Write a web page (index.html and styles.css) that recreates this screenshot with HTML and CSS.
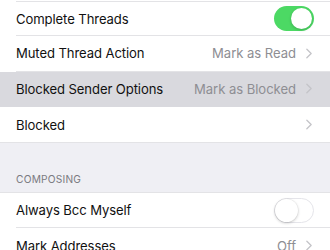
FILE: index.html
```html
<!DOCTYPE html>
<html>
<head>
<meta charset="utf-8">
<link rel="stylesheet" href="styles.css">
</head>
<body>
<div class="top-gap"></div>
<div class="group first">
  <div class="row">
    <div class="inner">
      <span class="label">Complete Threads</span>
      <span class="switch on"><span class="knob"></span></span>
    </div>
  </div>
  <div class="row">
    <div class="inner">
      <span class="label">Muted Thread Action</span>
      <span class="value">Mark as Read</span>
      <svg class="chev" viewBox="0 0 7 12" width="7" height="12"><path d="M1 1 L6 6 L1 11" fill="none" stroke="#c4c4c8" stroke-width="1.5" stroke-linecap="round" stroke-linejoin="round"/></svg>
    </div>
  </div>
  <div class="row selected">
    <div class="inner">
      <span class="label">Blocked Sender Options</span>
      <span class="value">Mark as Blocked</span>
      <svg class="chev" viewBox="0 0 7 12" width="7" height="12"><path d="M1 1 L6 6 L1 11" fill="none" stroke="#c4c4c8" stroke-width="1.5" stroke-linecap="round" stroke-linejoin="round"/></svg>
    </div>
  </div>
  <div class="row last">
    <div class="inner">
      <span class="label">Blocked</span>
      <span class="value"></span>
      <svg class="chev" viewBox="0 0 7 12" width="7" height="12"><path d="M1 1 L6 6 L1 11" fill="none" stroke="#c4c4c8" stroke-width="1.5" stroke-linecap="round" stroke-linejoin="round"/></svg>
    </div>
  </div>
</div>
<div class="section-header">COMPOSING</div>
<div class="group">
  <div class="row">
    <div class="inner">
      <span class="label">Always Bcc Myself</span>
      <span class="switch off"><span class="knob"></span></span>
    </div>
  </div>
  <div class="row">
    <div class="inner">
      <span class="label">Mark Addresses</span>
      <span class="value">Off</span>
      <svg class="chev" viewBox="0 0 7 12" width="7" height="12"><path d="M1 1 L6 6 L1 11" fill="none" stroke="#c4c4c8" stroke-width="1.5" stroke-linecap="round" stroke-linejoin="round"/></svg>
    </div>
  </div>
</div>
</body>
</html>
```
FILE: styles.css
```css
html, body {
  margin: 0;
  padding: 0;
  background: #ffffff;
  font-family: "Inter", "Roboto", "Liberation Sans", sans-serif;
  -webkit-font-smoothing: antialiased;
}
.top-gap {
  height: 1px;
  background: #fff;
}
.group {
  background: #fff;
}
.group.first .row:first-child .inner {
  border-top: 1px solid #e3e3e6;
}
.row {
  height: 35.3px;
  display: flex;
  box-sizing: border-box;
}
.row.selected {
  background: #d9d9de;
}
.inner {
  flex: 1;
  margin-left: 16px;
  padding-right: 18px;
  display: flex;
  align-items: center;
  border-bottom: 1px solid #e3e3e6;
  box-sizing: border-box;
}
.row.selected .inner {
  border-bottom-color: transparent;
}
.row.last .inner {
  border-bottom: none;
}
.label {
  flex: 1;
  font-size: 13.1px;
  color: #111;
  letter-spacing: -0.1px;
}
.value {
  font-size: 13.1px;
  color: #8e8e93;
  margin-right: 10px;
  letter-spacing: -0.05px;
}
.chev {
  display: block;
  width: 6px;
  height: 11px;
}
.switch {
  width: 40px;
  height: 25px;
  border-radius: 13px;
  box-sizing: border-box;
  display: flex;
  align-items: center;
  margin-right: -2px;
}
.switch.on {
  background: #4cd964;
  justify-content: flex-end;
  padding: 2px;
}
.switch.off {
  background: #fff;
  border: 1.5px solid #e5e5ea;
  justify-content: flex-start;
  padding: 0;
}
.knob {
  width: 21px;
  height: 21px;
  border-radius: 50%;
  background: #fff;
  box-shadow: 0 1px 3px rgba(0,0,0,0.2);
}
.switch.off .knob {
  width: 23px;
  height: 23px;
  box-shadow: 0 1px 3px rgba(0,0,0,0.22), 0 0 0 0.5px rgba(0,0,0,0.05);
}
.section-header {
  background: #efeff4;
  height: 51px;
  box-sizing: border-box;
  padding: 0 16px 7px;
  display: flex;
  align-items: flex-end;
  font-size: 10.2px;
  color: #7a7a80;
  letter-spacing: 0.2px;
  border-top: 1px solid #e3e3e6;
  border-bottom: 1px solid #e3e3e6;
}
```
